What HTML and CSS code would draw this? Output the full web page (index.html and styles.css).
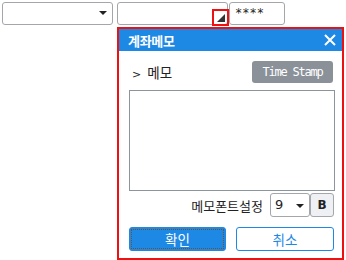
FILE: index.html
```html
<!DOCTYPE html>
<html lang="ko">
<head>
<meta charset="utf-8">
<link rel="stylesheet" href="styles.css">
</head>
<body>
<div class="top">
  <div class="field sel1"><span class="arrow"></span></div>
  <div class="field sel2"><span class="grip"><span class="tri"></span></span></div>
  <div class="field pw">****</div>
</div>
<div class="popup">
  <div class="head">
    <span class="title">계좌메모</span>
    <svg class="close" width="12" height="12" viewBox="0 0 12 12"><path d="M1 1L11 11M11 1L1 11" stroke="#fff" stroke-width="2"/></svg>
  </div>
  <div class="body">
    <div class="row1">
      <span class="label"><span class="gt">&gt;</span>메모</span>
      <button class="stamp">Time Stamp</button>
    </div>
    <div class="memo"></div>
    <div class="fontrow">
      <span class="flabel">메모폰트설정</span>
      <div class="size">9<span class="arrow small"></span></div>
      <div class="bold">B</div>
    </div>
    <div class="btns">
      <button class="ok">확인</button>
      <button class="cancel">취소</button>
    </div>
  </div>
</div>
</body>
</html>
```
FILE: styles.css
```css
html, body { margin: 0; padding: 0; background: #fff; }
body {
  font-family: "Noto Sans CJK KR", "DejaVu Sans", sans-serif;
  font-size: 13px;
  color: #222;
  width: 346px;
  height: 260px;
  position: relative;
  overflow: hidden;
}
.top {
  display: flex;
  padding: 2px 0 0 2px;
}
.field {
  box-sizing: border-box;
  height: 23px;
  border: 1px solid #a3a7ab;
  border-radius: 3px;
  position: relative;
  background: #fff;
}
.sel1 { width: 111px; margin-right: 4px; }
.sel2 { width: 111px; margin-right: 1px; }
.pw {
  width: 56px;
  font-family: "DejaVu Sans Mono", monospace;
  font-size: 12px;
  line-height: 21px;
  padding-left: 5px;
}
.arrow {
  position: absolute;
  right: 5px;
  top: 8px;
  width: 0; height: 0;
  border-left: 4px solid transparent;
  border-right: 4px solid transparent;
  border-top: 4px solid #222;
}
.grip {
  position: absolute;
  right: -2px;
  top: 6px;
  width: 17px;
  height: 17px;
  box-sizing: border-box;
  border: 2px solid #ee1111;
}
.tri {
  position: absolute;
  right: 2px;
  bottom: 2px;
  width: 0; height: 0;
  border-left: 8px solid transparent;
  border-bottom: 8px solid #333;
}
.popup {
  position: absolute;
  left: 117px;
  top: 27px;
  width: 227px;
  height: 233px;
  box-sizing: border-box;
  border: 2px solid #ee1111;
  background: #fff;
  display: flex;
  flex-direction: column;
}
.head {
  height: 22px;
  background: #1e88e5;
  display: flex;
  align-items: center;
  justify-content: space-between;
  padding: 0 6px 0 9px;
}
.title {
  color: #fff;
  font-weight: bold;
  font-size: 13px;
  letter-spacing: -0.3px;
}
.close { display: block; }
.body {
  padding: 10px 7px 0 10px;
  display: flex;
  flex-direction: column;
}
.row1 {
  display: flex;
  justify-content: space-between;
  align-items: center;
  height: 22px;
}
.label { padding-left: 3px; font-size: 13.5px; }
.gt { font-size: 11px; margin-right: 6px; font-family: "DejaVu Sans", sans-serif; }
.stamp {
  width: 81px;
  height: 22px;
  border: 0;
  border-radius: 3px;
  background: #8a9199;
  color: #fff;
  font-family: "DejaVu Sans Mono", monospace;
  font-size: 12px;
  letter-spacing: -1.2px;
  padding: 0;
  margin-right: 2px;
}
.memo {
  margin-top: 7px;
  height: 101px;
  box-sizing: border-box;
  border: 1px solid #8d949b;
}
.fontrow {
  margin-top: 2px;
  height: 24px;
  display: flex;
  justify-content: flex-end;
  align-items: center;
  padding-right: 1px;
}
.flabel { margin-right: 7px; font-size: 13px; }
.size {
  position: relative;
  width: 40px;
  height: 24px;
  box-sizing: border-box;
  border: 1px solid #a3a7ab;
  border-radius: 3px;
  padding-left: 4px;
  line-height: 21px;
  font-family: "DejaVu Sans", sans-serif;
  font-size: 13px;
}
.arrow.small { top: 10px; right: 5px; }
.bold {
  width: 24px;
  height: 24px;
  box-sizing: border-box;
  border: 1px solid #a3a7ab;
  border-radius: 3px;
  background: #eef0f3;
  font-family: "DejaVu Sans", sans-serif;
  font-weight: bold;
  font-size: 12px;
  text-align: center;
  line-height: 22px;
}
.btns {
  margin-top: 10px;
  display: flex;
  justify-content: space-between;
  padding-right: 1px;
}
.btns button {
  height: 24px;
  border-radius: 3px;
  font-family: "Noto Sans CJK KR", sans-serif;
  font-size: 13.5px;
  padding: 0;
}
.ok {
  width: 97px;
  background: #1e88e5;
  border: 1px solid #1e88e5;
  color: #fff;
  outline: 1px dotted #8a4a10;
  outline-offset: -3px;
}
.cancel {
  width: 98px;
  background: #fff;
  border: 1px solid #1e88e5;
  color: #1e88e5;
}
```
